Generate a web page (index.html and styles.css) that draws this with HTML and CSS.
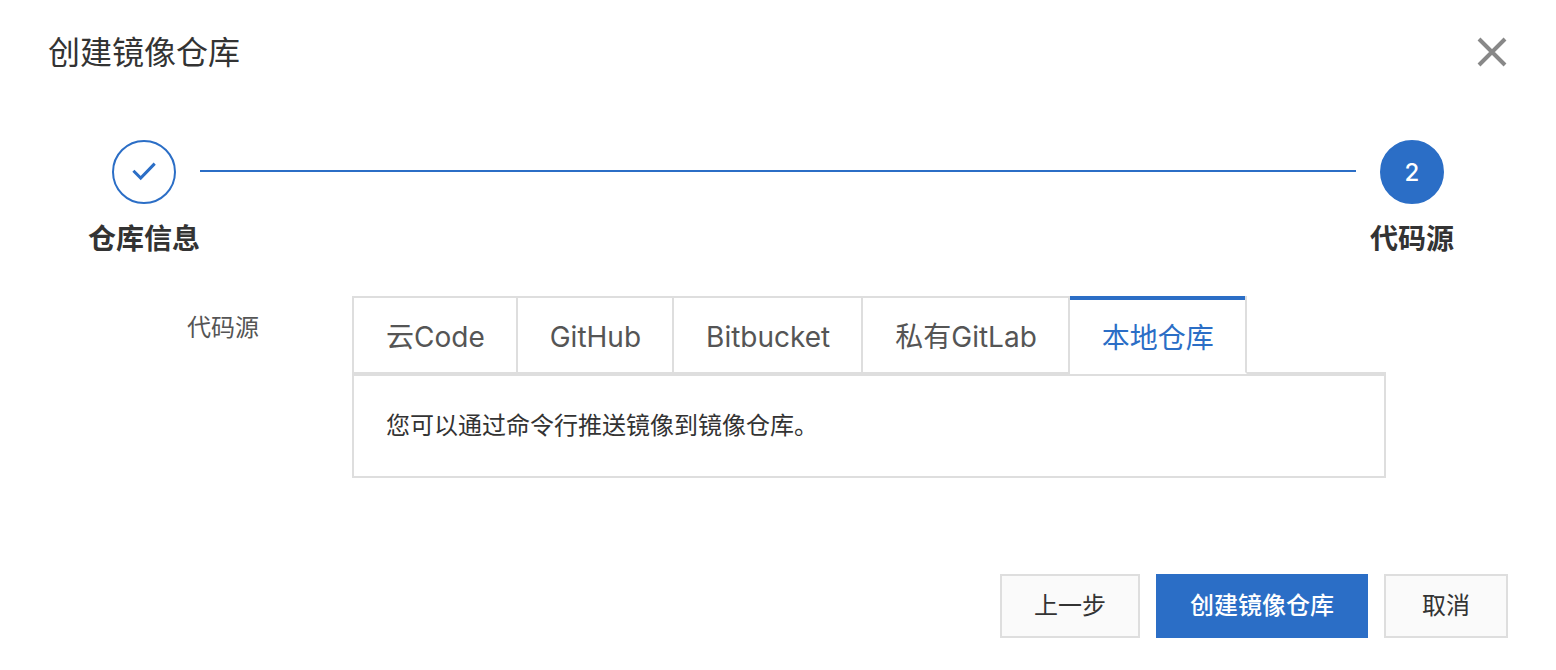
FILE: index.html
```html
<!DOCTYPE html>
<html lang="zh-CN">
<head>
<meta charset="utf-8">
<meta name="viewport" content="width=device-width, initial-scale=1">
<title>创建镜像仓库</title>
<link rel="stylesheet" href="styles.css">
</head>
<body>
<main class="dialog" role="dialog" aria-labelledby="dialog-title">
  <header class="dialog-header">
    <h1 class="dialog-title" id="dialog-title">创建镜像仓库</h1>
    <button class="close-button" type="button" aria-label="关闭">
      <svg class="close-icon" viewBox="0 0 32 32" aria-hidden="true"><path d="M3 3l26 26M29 3L3 29"/></svg>
    </button>
  </header>

  <ol class="steps">
    <li class="step">
      <span class="step-circle">
        <svg class="check-icon" viewBox="0 0 24 20" aria-hidden="true"><path d="M1.400 8.800L8.700 16L22.700 1.600"/></svg>
      </span>
      <span class="step-label">仓库信息</span>
    </li>
    <li class="step-line" aria-hidden="true"></li>
    <li class="step" aria-current="step">
      <span class="step-circle step-circle-current">2</span>
      <span class="step-label">代码源</span>
    </li>
  </ol>

  <section class="form-row">
    <span class="form-label" id="source-label">代码源</span>
    <div class="source">
      <div class="tabs" role="tablist" aria-labelledby="source-label">
        <button class="tab" type="button" role="tab" aria-selected="false">云Code</button>
        <button class="tab" type="button" role="tab" aria-selected="false">GitHub</button>
        <button class="tab" type="button" role="tab" aria-selected="false">Bitbucket</button>
        <button class="tab" type="button" role="tab" aria-selected="false">私有GitLab</button>
        <button class="tab tab-active" type="button" role="tab" aria-selected="true" id="tab-local" aria-controls="panel-local">本地仓库</button>
        <span class="tabs-rest"></span>
      </div>
      <div class="panel" role="tabpanel" id="panel-local" aria-labelledby="tab-local">
        <p class="panel-text">您可以通过命令行推送镜像到镜像仓库。</p>
      </div>
    </div>
  </section>

  <footer class="dialog-footer">
    <button class="button" type="button">上一步</button>
    <button class="button button-primary" type="button">创建镜像仓库</button>
    <button class="button button-wide" type="button">取消</button>
  </footer>
</main>
</body>
</html>
```
FILE: styles.css
```css
:root {
  --blue: #2b6ec6;
  --line: #dedede;
  --text: #333;
  --muted: #555;
}

* {
  box-sizing: border-box;
}

body {
  margin: 0;
  background: #fff;
  color: var(--text);
  font-family: Inter, "Noto Sans CJK SC", sans-serif;
  font-size: 24px;
  line-height: 32px;
}

button {
  margin: 0;
  font: inherit;
  color: inherit;
  cursor: pointer;
}

.dialog {
  padding: 28px 48px 32px;
}

.dialog-header {
  display: flex;
  align-items: center;
  justify-content: space-between;
}

.dialog-title {
  margin: 0;
  padding-top: 2px;
  font-size: 32px;
  line-height: 46px;
  font-weight: 400;
}

.close-button {
  display: flex;
  padding: 0;
  border: 0;
  background: none;
}

.close-icon {
  width: 32px;
  height: 32px;
  fill: none;
  stroke: #888;
  stroke-width: 4;
}

.steps {
  display: flex;
  margin: 64px 40px 0;
  padding: 0;
  list-style: none;
}

.step {
  display: flex;
  flex-direction: column;
  align-items: center;
  width: 112px;
}

.step-circle {
  display: flex;
  align-items: center;
  justify-content: center;
  width: 64px;
  height: 64px;
  border: 2px solid var(--blue);
  border-radius: 50%;
  color: var(--blue);
}

.step-circle-current {
  padding-top: 2px;
  background: var(--blue);
  color: #fff;
  font-weight: 500;
}

.check-icon {
  width: 24px;
  height: 20px;
  fill: none;
  stroke: currentColor;
  stroke-width: 3;
}

.step-label {
  margin-top: 15px;
  font-size: 28px;
  line-height: 40px;
  font-weight: 700;
  white-space: nowrap;
}

.step-line {
  flex: 1;
  height: 2px;
  margin-top: 30px;
  background: var(--blue);
}

.form-row {
  display: grid;
  grid-template-columns: 211px 1fr;
  column-gap: 93px;
  margin: 37px 122px 0 0;
}

.form-label {
  padding-top: 16px;
  color: var(--muted);
  text-align: right;
}

.tabs {
  display: flex;
}

.tab {
  padding: 20px 31px 16px 32px;
  border: solid var(--line);
  border-width: 2px 2px 2px 0;
  background: #fff;
  color: var(--muted);
  font-size: 28px;
  line-height: 38px;
  white-space: nowrap;
}

.tab:first-child {
  border-left-width: 2px;
}

.tab-active {
  padding-top: 23px;
  padding-bottom: 15px;
  border-top: 0;
  border-bottom-color: #fff;
  box-shadow: inset 0 4px var(--blue);
  color: var(--blue);
}

.tabs-rest {
  flex: 1;
  border-bottom: 2px solid var(--line);
}

.panel {
  padding: 34px 32px;
  border: 2px solid var(--line);
}

.panel-text {
  margin: 0;
}

.dialog-footer {
  display: flex;
  justify-content: flex-end;
  gap: 16px;
  margin-top: 96px;
}

.button {
  padding: 14px 32px;
  border: 2px solid var(--line);
  background: #fafafa;
}

.button-primary {
  border-color: var(--blue);
  background: var(--blue);
  color: #fff;
  font-weight: 500;
}

.button-wide {
  padding-inline: 36px;
}
```
